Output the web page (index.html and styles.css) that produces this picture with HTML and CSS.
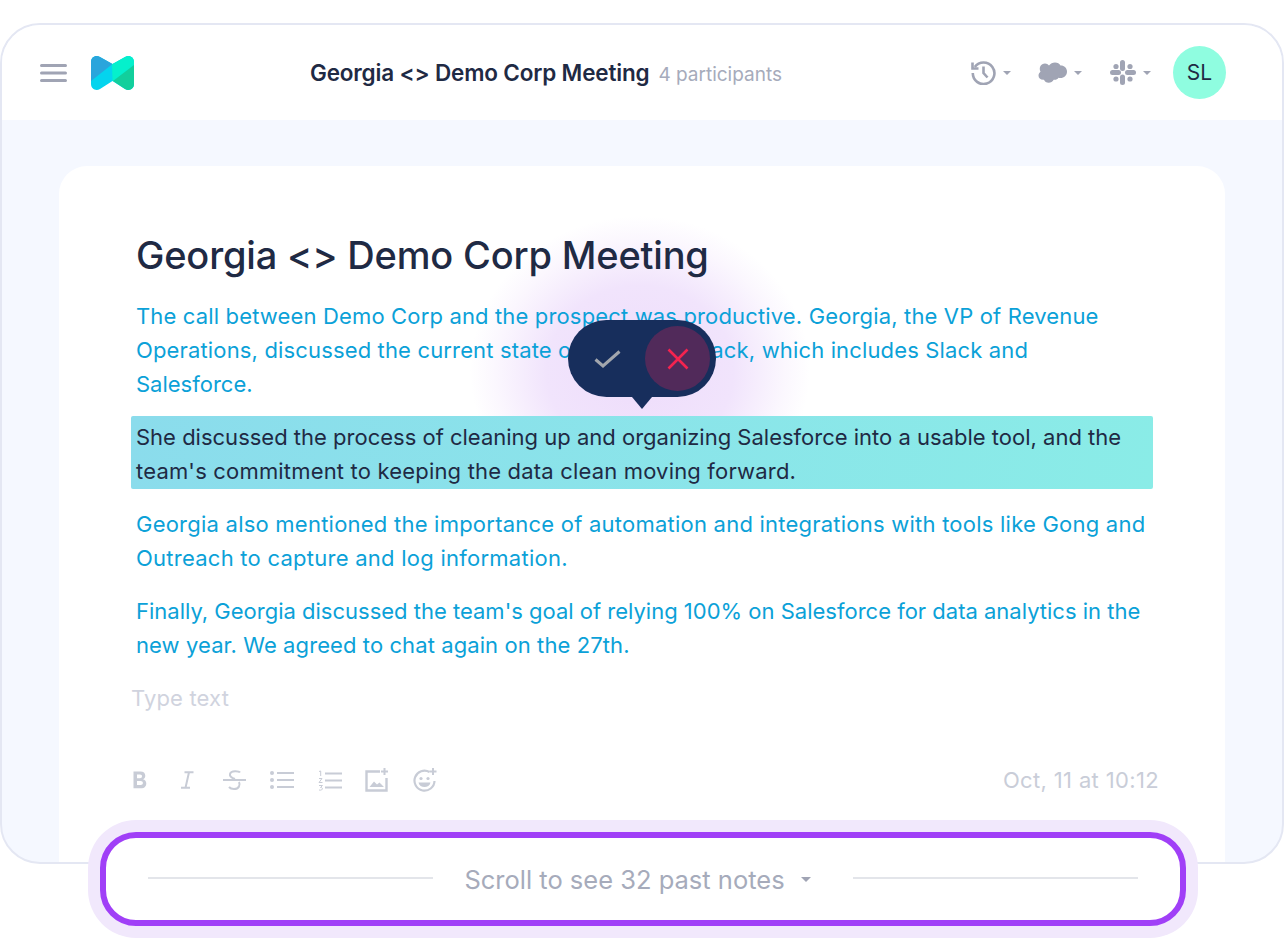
FILE: index.html
```html
<!DOCTYPE html>
<html lang="en">
<head>
<meta charset="utf-8">
<title>Georgia &lt;&gt; Demo Corp Meeting</title>
<link rel="stylesheet" href="styles.css">
</head>
<body>
<div class="page">
  <div class="frame">
    <header class="topbar">
      <div class="brand">
        <svg class="menu" width="27" height="18" viewBox="0 0 27 18"><path d="M1.500 1.500h24M1.500 9h24M1.500 16.500h24" fill="none" stroke="#a0a4b4" stroke-width="3" stroke-linecap="round"/></svg>
        <svg class="logo" width="43" height="34" viewBox="0 0 43 34">
          <path d="M0 6C0 1 5-1.500 9 1L21.500 8 34 1c4-2.500 9 0 9 5v22c0 5-5 7.500-9 5L21.500 25 9 33c-4 2.500-9 0-9-5z" fill="#04d4ee"/>
          <path d="M0 6C0 1 5-1.500 9 1L21.500 8 0 25z" fill="#2aa5dc"/>
          <path d="M21.500 8 34 1c4-2.500 9 0 9 5v3L23 25 21.500 25 21 8z" fill="#05f0cc"/>
          <path d="M43 9v19c0 5-5 7.500-9 5L22 25z" fill="#12cf9c"/>
        </svg>
      </div>
      <div class="meeting">
        <span class="meeting-name">Georgia &lt;&gt; Demo Corp Meeting</span>
        <span class="meeting-count">4 participants</span>
      </div>
      <div class="tools">
        <div class="tool tool-history">
          <svg width="25" height="25" viewBox="0 0 25 25" fill="none" stroke="#a0a4b4" stroke-width="2.600"><path d="M3.800 7A10.800 10.800 0 1 1 1.800 13"/><path d="M1.500 2.500V8.500H7.500"/><path d="M12.500 6.500V13l4 4.500"/></svg>
          <i class="caret"></i>
        </div>
        <div class="tool tool-crm">
          <svg width="30" height="21" viewBox="0 0 30 21"><path d="M12 3.500C13.500 1.500 15.500.5 18 .5c2.500 0 4.500 1.200 5.500 3C27 3.300 30 6 30 9.500 30 13.500 27 16 23.500 16c-.7 0-1.500-.1-2-.3-1 1.600-3 2.400-4.800 2-.9 2-3 3-5 3-2.300 0-4-1.200-4.700-3C3.500 18 1.500 16 1.500 13.500c0-1.800 1-3 2-3.800C1.500 5.500 4 1.500 8 1.500c1.600 0 3 .8 4 2z" fill="#a0a4b4"/></svg>
          <i class="caret"></i>
        </div>
        <div class="tool tool-chat">
          <svg width="26" height="25" viewBox="0 0 26 25" fill="#a0a4b4"><rect x="0" y="10" width="11" height="5" rx="2.500"/><rect x="10" y="0" width="5" height="11" rx="2.500"/><rect x="15" y="10" width="11" height="5" rx="2.500"/><rect x="10" y="14.500" width="5" height="10.500" rx="2.500"/><circle cx="6" cy="6.500" r="2.600"/><circle cx="20" cy="6.500" r="2.600"/><circle cx="20" cy="19" r="2.600"/><circle cx="6" cy="19" r="2.600"/></svg>
          <i class="caret"></i>
        </div>
        <div class="avatar">SL</div>
      </div>
    </header>
    <main class="stage">
      <article class="card">
        <div class="glow"></div>
        <h1 class="title">Georgia &lt;&gt; Demo Corp Meeting</h1>
        <p class="note note-lead"><span class="t2">The call between Demo Corp and the prospect was productive. Georgia, the VP of Revenue</span><br><span class="t2">Operations, discussed the current state of their tech stack, which includes Slack and</span><br><span class="t0">Salesforce.</span></p>
        <p class="note note-active"><span class="t0">She discussed the process of cleaning up and organizing Salesforce into a usable tool, and the</span><br><span class="t3">team's commitment to keeping the data clean moving forward.</span></p>
        <p class="note"><span class="t5">Georgia also mentioned the importance of automation and integrations with tools like Gong and</span><br><span class="t4">Outreach to capture and log information.</span></p>
        <p class="note note-last"><span class="t0">Finally, Georgia discussed the team's goal of relying 100% on Salesforce for data analytics in the</span><br><span class="t1">new year. We agreed to chat again on the 27th.</span></p>
        <p class="placeholder">Type text</p>
        <div class="toolbar">
          <div class="format">
            <span class="slot"><svg width="16" height="20" viewBox="0 0 16 20"><path d="M1.500 1.500h7c3 0 4.800 1.600 4.800 4.200 0 1.700-.9 3-2.300 3.500 2 .5 3.300 2 3.300 4.200 0 3-2.100 4.900-5.300 4.900H1.500zM5 4.500v3.700h3c1.300 0 2-.7 2-1.900 0-1.100-.7-1.800-2-1.800zM5 11v4h3.600c1.500 0 2.300-.8 2.300-2s-.8-2-2.300-2z" fill="#c8ccd6" fill-rule="evenodd"/></svg></span>
            <span class="slot"><svg width="14" height="18" viewBox="0 0 14 18"><path d="M4.500 1.200h9M1 16.800h9M9 1.200 5.500 16.800" fill="none" stroke="#c8ccd6" stroke-width="2"/></svg></span>
            <span class="slot"><svg width="23" height="22" viewBox="0 0 23 22"><path d="M0 11h23M17 3.500c-1-1.500-9-2.500-10 1.500-.6 2.500 2 4 5 5M16 13c1.500 3 0 7-5 7-2.500 0-4-.8-5-2" fill="none" stroke="#c8ccd6" stroke-width="2"/></svg></span>
            <span class="slot"><svg width="24" height="20" viewBox="0 0 24 20"><g fill="#c8ccd6"><circle cx="2" cy="3" r="2"/><circle cx="2" cy="10" r="2"/><circle cx="2" cy="17" r="2"/></g><path d="M7 3h17M7 10h17M7 17h17" stroke="#c8ccd6" stroke-width="2.200"/></svg></span>
            <span class="slot"><svg width="24" height="21" viewBox="0 0 24 21"><path d="M7 3.500h17M7 10.500h17M7 17.500h17" stroke="#c8ccd6" stroke-width="2.200"/><path d="M1 1.500 2.700 1V6M1 8.500h3L1 12.500h3.500M1 15.500h3.500L2.500 17.500c3-.3 2.500 3.500-1.500 2.500" fill="none" stroke="#c8ccd6" stroke-width="1"/></svg></span>
            <span class="slot"><svg width="24" height="24" viewBox="0 0 24 24" fill="none" stroke="#c8ccd6" stroke-width="2.400"><path d="M15 3.500H1.500V22.500H21.500V10"/><path d="M4.500 19 9 13.500l3 3 2.500-2 4.500 4.500z" fill="#c8ccd6" stroke="none"/><path d="M19.500 0v7M16 3.500h7" stroke-width="2"/></svg></span>
            <span class="slot"><svg width="24" height="24" viewBox="0 0 24 24" fill="none" stroke="#c8ccd6" stroke-width="2.200"><path d="M16.500 4A10 10 0 1 0 21.500 13"/><circle cx="8" cy="10.500" r="1.600" fill="#c8ccd6" stroke="none"/><circle cx="15" cy="10.500" r="1.600" fill="#c8ccd6" stroke="none"/><path d="M5.500 14.500h12c-1 6-11 6-12 0z" fill="#c8ccd6" stroke="none"/><path d="M20 0v7M16.500 3.500h7" stroke-width="2"/></svg></span>
          </div>
          <span class="date">Oct, 11 at 10:12</span>
        </div>
      </article>
    </main>
  </div>
  <div class="popover">
    <svg class="check" width="27" height="18" viewBox="0 0 27 18"><path d="M1.500 9.500 9 16 25.500 1.500" fill="none" stroke="#a2a6ad" stroke-width="3"/></svg>
    <div class="reject"><svg width="22" height="22" viewBox="0 0 22 22"><path d="M1.500 1.500l19 19M20.500 1.500l-19 19" stroke="#f5234f" stroke-width="2.600"/></svg></div>
  </div>
  <div class="scroller">
    <span class="rule"></span>
    <span class="scroller-label">Scroll to see 32 past notes <i class="caret caret-large"></i></span>
    <span class="rule"></span>
  </div>
</div>
</body>
</html>
```
FILE: styles.css
```css
* { box-sizing: border-box; }
html, body { margin: 0; background: #fff; }
body { font-family: "Inter", "Noto Sans", sans-serif; color: #1f2a44; }
.page { position: relative; width: 1284px; height: 944px; overflow: hidden; padding: 23px 0 0 0; }
.frame { width: 1284px; height: 841px; border: 2px solid #e4e7f3; border-radius: 40px; overflow: hidden; display: flex; flex-direction: column; background: #f5f8ff; }
.topbar { height: 95px; background: #fff; display: flex; align-items: center; padding: 0 56px 0 38px; flex: none; }
.brand { display: flex; align-items: center; gap: 24px; width: 270px; }
.meeting { display: flex; align-items: baseline; gap: 9px; flex: 1; }
.meeting-name { font-size: 22.500px; font-weight: 600; letter-spacing: -.17px; }
.meeting-count { font-size: 19px; color: #a6abbb; }
.tools { display: flex; align-items: center; }
.tool { display: flex; align-items: center; gap: 7px; }
.tool-history { margin-right: 26px; }
.tool-crm { margin-right: 28px; }
.tool-chat { margin-right: 22px; }
.caret { display: inline-block; width: 0; height: 0; border: 4px solid transparent; border-top: 4px solid #a0a4b4; border-bottom: 0; }
.avatar { width: 53px; height: 53px; border-radius: 50%; background: #8ffde0; font-size: 21px; display: flex; align-items: center; justify-content: center; }
.stage { flex: 1; padding: 46px 57px 0; min-height: 0; }
.card { position: relative; height: 100%; background: #fff; border-radius: 28px 28px 0 0; padding: 65px 66px 0 77px; }
.glow { position: absolute; left: 411px; top: 50px; width: 340px; height: 310px; border-radius: 50%; background: radial-gradient(closest-side, #eedcfb 0%, #f1e4fc 55%, #fbf7fe 85%, rgba(255,255,255,0) 100%); clip-path: inset(0 0 37px 0); }
.title { position: relative; margin: 0 0 20px; font-size: 38px; line-height: 48px; font-weight: 500; letter-spacing: -.18px; color: #1f2a44; }
.note { position: relative; margin: 0 0 19px; font-size: 22px; line-height: 34px; color: #0ba1d8; white-space: nowrap; }
.note-lead { margin-bottom: 15px; }
.note-active { margin: 0 6px 18px -5px; padding: 4px 5px 1px; border-radius: 2px; color: #1f2a44; background: linear-gradient(100deg, #8bdcec, #8aece7); }
.t0 { letter-spacing: 0; }
.t1 { letter-spacing: .09px; }
.t2 { letter-spacing: .15px; }
.t3 { letter-spacing: .18px; }
.t4 { letter-spacing: .25px; }
.t5 { letter-spacing: .23px; }
.placeholder { position: relative; margin: 0 0 0 -5px; font-size: 22px; line-height: 34px; letter-spacing: .15px; color: #d0d3de; }
.toolbar { display: flex; justify-content: space-between; align-items: center; margin: 52px 0 0 -8.500px; }
.format { display: flex; align-items: center; gap: 23.500px; }
.slot { width: 24px; display: flex; justify-content: center; }
.date { font-size: 22px; letter-spacing: .35px; color: #c9cdd8; }
.popover { position: absolute; left: 568px; top: 320px; width: 148px; height: 77px; border-radius: 39px; background: #172e5c; display: flex; align-items: center; justify-content: space-between; padding: 0 6px 0 26px; }
.popover::after { content: ""; position: absolute; left: 64px; top: 77px; border: 10px solid transparent; border-top: 12px solid #172e5c; border-bottom: 0; }
.reject { width: 65px; height: 65px; border-radius: 50%; background: #512a5a; display: flex; align-items: center; justify-content: center; }
.scroller { position: absolute; left: 100px; top: 832px; width: 1086px; height: 94px; background: #fff; border: 6px solid #a03ff7; border-radius: 36px; box-shadow: 0 0 0 12px #f1e8fc; display: flex; align-items: center; justify-content: space-between; padding: 0 42px; }
.rule { width: 285px; height: 1.500px; background: #e3e5ea; margin-top: -2px; }
.scroller-label { font-size: 25.500px; color: #a6abbb; white-space: nowrap; display: flex; align-items: center; gap: 16px; margin: 0 11px 0 0; }
.caret-large { border-width: 5px; }
```
